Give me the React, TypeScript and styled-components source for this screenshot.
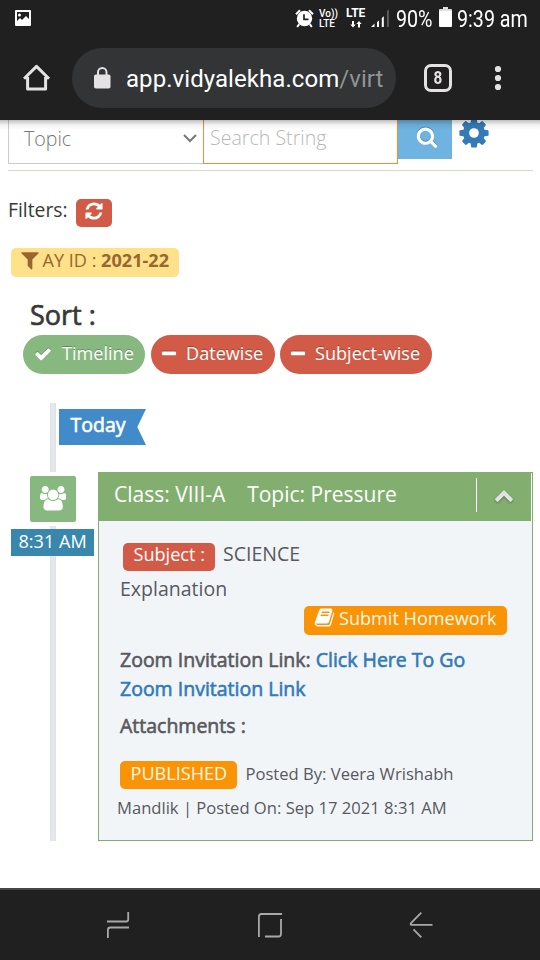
import React from "react";
import styled, { createGlobalStyle } from "styled-components";

const GlobalStyle = createGlobalStyle`
  * { box-sizing: border-box; }
  html, body { margin: 0; padding: 0; background: #fff; }
  body { font-family: "Open Sans", "Noto Sans", sans-serif; color: #393939; overflow: hidden; }
  svg { display: block; flex: none; }
`;

/* ---------- Icons ---------- */

const glyphs = {
  search:
    "M1216 832q0-185-131.5-316.5t-316.5-131.5-316.5 131.5-131.5 316.5 131.5 316.5 316.5 131.5 316.5-131.5 131.5-316.5zm512 832q0 52-38 90t-90 38q-54 0-90-38l-343-342q-179 124-399 124-143 0-273.5-55.5t-225-150-150-225-55.5-273.5 55.5-273.5 150-225 225-150 273.5-55.5 273.5 55.5 225 150 150 225 55.5 273.5q0 220-124 399l343 343q37 37 37 90z",
  refresh:
    "M1639 1056q0 5-1 7-64 268-268 434.5t-478 166.5q-146 0-282.5-55t-243.5-157l-129 129q-19 19-45 19t-45-19-19-45v-448q0-26 19-45t45-19h448q26 0 45 19t19 45-19 45l-137 137q71 66 161 102t187 36q134 0 250-65t186-179q11-17 53-117 8-23 30-23h192q13 0 22.5 9.5t9.5 22.5zm25-800v448q0 26-19 45t-45 19h-448q-26 0-45-19t-19-45 19-45l138-138q-148-137-349-137-134 0-250 65t-186 179q-11 17-53 117-8 23-30 23h-199q-13 0-22.5-9.5t-9.5-22.5v-7q65-268 270-434.5t480-166.5q146 0 284 55.5t245 156.5l130-129q19-19 45-19t45 19 19 45z",
  filter:
    "M1595 295q17 41-14 70l-493 493v742q0 42-39 59-13 5-25 5-27 0-45-19l-256-256q-19-19-19-45v-486l-493-493q-31-29-14-70 17-39 59-39h1280q42 0 59 39z",
  check:
    "M1671 566q0 40-28 68l-724 724-136 136q-28 28-68 28t-68-28l-136-136-362-362q-28-28-28-68t28-68l136-136q28-28 68-28t68 28l294 295 656-657q28-28 68-28t68 28l136 136q28 28 28 68z",
  minus:
    "M1600 736v192q0 40-28 68t-68 28h-1216q-40 0-68-28t-28-68v-192q0-40 28-68t68-28h1216q40 0 68 28t28 68z",
  chevronUp:
    "M1683 1331l-166 165q-19 19-45 19t-45-19l-531-531-531 531q-19 19-45 19t-45-19l-166-165q-19-19-19-45.5t19-45.5l742-741q19-19 45-19t45 19l742 741q19 19 19 45.5t-19 45.5z",
  cog: "M1152 896q0-106-75-181t-181-75-181 75-75 181 75 181 181 75 181-75 75-181zm512-109v222q0 12-8 23t-20 13l-185 28q-19 54-39 91 35 50 107 138 10 12 10 25t-9 23q-27 37-99 108t-94 71q-12 0-26-9l-138-108q-44 23-91 38-16 136-29 186-7 28-36 28h-222q-14 0-24.5-8.5t-11.5-21.5l-28-184q-49-16-90-37l-141 107q-10 9-25 9-14 0-25-11-126-114-165-168-7-10-7-23 0-12 8-23 15-21 51-66.5t54-70.5q-27-50-41-99l-183-27q-13-2-21-12.5t-8-23.5v-222q0-12 8-23t19-13l186-28q14-46 39-92-40-57-107-138-10-12-10-24 0-10 9-23 26-36 98.5-107.5t94.5-71.5q13 0 26 10l138 107q44-23 91-38 16-136 29-186 7-28 36-28h222q14 0 24.5 8.5t11.5 21.5l28 184q49 16 90 37l142-107q9-9 24-9 13 0 25 10 129 119 165 170 7 8 7 22 0 12-8 23-15 21-51 66.5t-54 70.5q26 50 41 98l183 28q13 2 21 12.5t8 23.5z",
  book: "M1703 478q40 57 18 129l-275 906q-19 64-76.5 107.5t-122.5 43.5h-923q-77 0-148.5-53.5t-99.5-131.5q-24-67-2-127 0-4 3-27t4-37q1-8-3-21.5t-3-19.5q2-11 8-21t16.5-23.5 16.5-23.5q23-38 45-91.5t30-91.5q3-10 .5-30t-.5-28q3-11 17-28t17-23q21-36 42-92t25-90q1-9-2.5-32t.5-28q4-13 22-30.5t22-22.5q19-26 42.5-84.5t27.5-96.5q1-8-3-25.5t-2-26.5q2-8 9-18t18-23 17-21q8-12 16.5-30.5t15-35 16-36 19.5-32 26.5-23.5 36-11.5 47.5 5.5l-1 3q38-9 51-9h761q74 0 114 56t18 130l-274 906q-36 119-71.5 153.5t-128.5 34.5h-869q-27 0-38 15-11 16-1 43 24 70 144 70h923q29 0 56-15.5t35-41.5l300-987q7-22 5-57 38 15 59 43zm-1064 2q-4 13 2 22.5t20 9.5h608q13 0 25.5-9.5t16.5-22.5l21-64q4-13-2-22.5t-20-9.5h-608q-13 0-25.5 9.5t-16.5 22.5zm-83 256q-4 13 2 22.5t20 9.5h608q13 0 25.5-9.5t16.5-22.5l21-64q4-13-2-22.5t-20-9.5h-608q-13 0-25.5 9.5t-16.5 22.5z",
  users:
    "M593 896q-162 5-265 128h-134q-82 0-138-40.5t-56-118.5q0-353 124-353 6 0 43.5 21t97.5 42.5 119 21.5q67 0 133-23-5 37-5 66 0 139 81 256zm1071 637q0 120-73 189.5t-194 69.5h-874q-121 0-194-69.5t-73-189.5q0-53 3.5-103.5t14-109 26.5-108.5 43-97.5 62-81 85.5-53.5 111.5-20q10 0 43 21.5t73 48 107 48 135 21.5 135-21.5 107-48 73-48 43-21.5q61 0 111.5 20t85.5 53.5 62 81 43 97.5 26.5 108.5 14 109 3.5 103.5zm-1024-1277q0 106-75 181t-181 75-181-75-75-181 75-181 181-75 181 75 75 181zm704 384q0 159-112.5 271.5t-271.5 112.5-271.5-112.5-112.5-271.5 112.5-271.5 271.5-112.5 271.5 112.5 112.5 271.5zm576 225q0 78-56 118.5t-138 40.5h-134q-103-123-265-128 81-117 81-256 0-29-5-66 66 23 133 23 59 0 119-21.5t97.5-42.5 43.5-21q124 0 124 353zm-128-609q0 106-75 181t-181 75-181-75-75-181 75-181 181-75 181 75 75 181z",
};

function Glyph({ name, size, wide }: { name: keyof typeof glyphs; size: number; wide?: boolean }) {
  const w = wide ? 1920 : 1792;
  return (
    <svg width={(size * w) / 1792} height={size} viewBox={`0 0 ${w} 1792`} fill="currentColor">
      <path d={glyphs[name]} />
    </svg>
  );
}

const PictureIcon = () => (
  <svg width="16" height="16" viewBox="0 0 16 16">
    <path
      fill="#fff"
      fillRule="evenodd"
      d="M1 0h14q1 0 1 1v14q0 1-1 1H1q-1 0-1-1V1Q0 0 1 0ZM2 2v9l3-3 2 2 4-4 3 3V2ZM4.500 3.500a1.500 1.500 0 1 1 0 3 1.500 1.500 0 0 1 0-3Z"
    />
  </svg>
);

const AlarmIcon = () => (
  <svg width="20" height="19" viewBox="0 0 20 19">
    <circle cx="9.500" cy="9.500" r="7.700" fill="#fff" />
    <path d="M1 5.200 5 1.200M14 1.200l4 4M4.200 15.200 2.200 18M14.800 15.200l2 2.800" stroke="#fff" strokeWidth="2" />
    <path d="M9 5.300v5h4.500" stroke="#202020" strokeWidth="1.700" fill="none" />
  </svg>
);

const DataArrows = () => (
  <svg width="12" height="7" viewBox="0 0 12 7" fill="#fff">
    <path d="M2 0h2v3.500h1.700L3 6.500.300 3.500H2ZM8 6.500h2V3h1.700L9 0 6.300 3H8Z" />
  </svg>
);

const SignalIcon = () => (
  <svg width="19" height="19" viewBox="0 0 19 19">
    <path fill="#fff" d="M0 18l3.500-3.500V18ZM6 13l2-1.500V18H6ZM10.800 9l2-1.700V18h-2Z" />
    <path fill="#606060" d="M16 2l1.800-1.500V18H16Z" />
  </svg>
);

const BatteryIcon = () => (
  <svg width="13" height="20" viewBox="0 0 13 20">
    <path fill="#ddd" d="M4 0h5v2h3q1 0 1 1v1H0V3q0-1 1-1h3Z" />
    <path fill="#fff" d="M0 4h13v15q0 1-1 1H1q-1 0-1-1Z" />
  </svg>
);

const HomeIcon = () => (
  <svg width="28" height="28" viewBox="0 0 28 28" fill="none" stroke="#e4e2e3" strokeWidth="3" strokeLinejoin="round">
    <path d="M1 14.800 13.500 2.400 26 14.800M4.600 13v12h18V13" />
  </svg>
);

const LockIcon = () => (
  <svg width="17" height="22" viewBox="0 0 17 22">
    <rect y="7.500" width="16.500" height="14" rx="1.800" fill="#e4e2e3" />
    <path d="M4 8V5.300a4.200 4.200 0 0 1 8.500 0V8" fill="none" stroke="#e4e2e3" strokeWidth="2" />
  </svg>
);

const MenuDots = () => (
  <svg width="8" height="26" viewBox="0 0 8 26" fill="#e4e2e3">
    <circle cx="4" cy="4" r="3.100" />
    <circle cx="4" cy="13" r="3.100" />
    <circle cx="4" cy="22" r="3.100" />
  </svg>
);

const SelectArrow = () => (
  <svg width="14" height="9" viewBox="0 0 14 9" fill="none" stroke="#777" strokeWidth="2">
    <path d="M1 1l6 6 6-6" />
  </svg>
);

const RecentsIcon = () => (
  <svg width="24" height="28" viewBox="0 0 24 28" fill="none" stroke="#a8a8a8" strokeWidth="1.800">
    <path d="M22.200 1v7.500q0 2-2 2H1M1.900 27v-8q0-2.500 2.500-2.500H23" />
  </svg>
);

const SquareIcon = () => (
  <svg width="26" height="26" viewBox="0 0 26 26" fill="none" stroke="#a8a8a8" strokeWidth="1.800">
    <path d="M1.900 25V4.500Q1.900 2 4.400 2H25M24 7v15q0 2.500-2.500 2.500H8" />
  </svg>
);

const BackIcon = () => (
  <svg width="24" height="28" viewBox="0 0 24 28" fill="none" stroke="#a8a8a8" strokeWidth="1.800">
    <path d="M12.300 1.700 2 12q-1 1.800.800 1.800H23.500M4.500 18.300l7.800 8" />
  </svg>
);

/* ---------- Phone chrome ---------- */

const Screen = styled.div`
  width: 540px;
  height: 960px;
  display: flex;
  flex-direction: column;
  overflow: hidden;
  background: #fff;
`;

const StatusBar = styled.header`
  height: 38px;
  flex: none;
  display: flex;
  align-items: flex-start;
  padding: 0 12px 0 15px;
  background: #202020;
  color: #fff;
  font-family: Roboto, sans-serif;
`;

const StatusSlot = styled.div<{ $top: number; $width: number }>`
  width: ${(p) => p.$width}px;
  padding-top: ${(p) => p.$top}px;
  flex: none;
`;

const StatusSpacer = styled.div`
  flex: 1;
`;

const VolteBadge = styled.div`
  display: flex;
  flex-direction: column;
  font: 500 10px/10px Roboto, sans-serif;
  white-space: nowrap;
`;

const LteLabel = styled.div`
  font: 700 12px/11px Roboto, sans-serif;
  white-space: nowrap;
  svg { margin: 2px 0 0 4px; }
`;

const CondensedText = styled.span<{ $scale: number }>`
  display: inline-block;
  font-size: 24px;
  line-height: 24px;
  white-space: nowrap;
  transform: scaleX(${(p) => p.$scale});
  transform-origin: left;
`;

const BrowserBar = styled.div`
  height: 82px;
  flex: none;
  display: flex;
  align-items: center;
  padding: 0 0 2px 23px;
  background: #202020;
`;

const AddressPill = styled.div`
  width: 324px;
  height: 60px;
  margin: 0 28px 0 21px;
  padding-left: 22px;
  border-radius: 30px;
  display: flex;
  align-items: center;
  background: #323436;
`;

const Address = styled.div`
  margin: 2px 0 0 15px;
  font: 400 24px/34px Roboto, sans-serif;
  letter-spacing: 0.060px;
  color: #fff;
  white-space: nowrap;
  span { color: #929394; }
`;

const TabCount = styled.div`
  width: 28px;
  height: 28px;
  border: 3px solid #e4e2e3;
  border-radius: 7px;
  margin-right: 42px;
  color: #e4e2e3;
  font: 700 18px/22px Roboto, sans-serif;
  text-align: center;
  span { display: block; transform: scaleX(0.850); }
`;

const NavBar = styled.nav`
  height: 72px;
  flex: none;
  display: flex;
  justify-content: space-between;
  align-items: center;
  padding: 0 107px 1px 106px;
  background: #202020;
  border-top: 2px solid #454545;
`;

/* ---------- Web page ---------- */

const Page = styled.main`
  height: 768px;
  flex: none;
  overflow: hidden;
  position: relative;
  &::before {
    content: "";
    position: absolute;
    inset: 0 0 auto;
    height: 10px;
    background: linear-gradient(rgba(0, 0, 0, 0.25), rgba(0, 0, 0, 0.05) 50%, transparent);
  }
`;

const SearchRow = styled.div`
  margin: 0 7px 0 8px;
  height: 51px;
  display: flex;
  align-items: flex-start;
  border-bottom: 1px solid #d3dccb;
`;

const Field = styled.div`
  width: 195px;
  height: 44px;
  display: flex;
  justify-content: space-between;
  padding: 0 6px 0 15px;
  border: solid #cccccc;
  border-width: 0 0 1px 1px;
  color: #777;
  font-size: 19.600px;
  font-weight: 300;
  line-height: 37px;
  white-space: nowrap;
  svg { margin-top: 14px; }
`;

const FocusedField = styled(Field)`
  padding-left: 6px;
  border: solid #e0963c;
  border-width: 0 1px 1px 1px;
  box-shadow: inset 0 0 1px rgba(240, 180, 60, 0.6);
  color: #b8b8b8;
  line-height: 35px;
`;

const SearchButton = styled.button`
  width: 54px;
  height: 39px;
  display: flex;
  align-items: flex-start;
  border: 0;
  padding: 6px 0 0 18px;
  background: #6fb3e0;
  color: #fff;
  svg { filter: drop-shadow(0 -1px 0 rgba(0, 0, 0, 0.25)); }
`;

const Settings = styled.div`
  margin: -4.500px 0 0 4.500px;
  color: #337ab7;
`;

const FilterRow = styled.div`
  display: flex;
  margin: 28px 0 0 8px;
  height: 28px;
  font-size: 19.300px;
  line-height: 22px;
`;

const RefreshButton = styled.button`
  display: flex;
  align-items: flex-start;
  width: 36px;
  height: 28px;
  margin-left: 8px;
  border: 0;
  border-radius: 5px;
  padding: 2px 0 0 8px;
  background: #d15b47;
  color: #fff;
`;

const FilterChip = styled.div`
  display: flex;
  width: 168px;
  height: 29px;
  margin: 21px 0 0 11px;
  padding-left: 9px;
  border-radius: 5px;
  background: #fee188;
  color: #996633;
  font-size: 18.100px;
  line-height: 24px;
  white-space: pre;
  svg { margin: 1px 2px 0 -1.500px; }
  b { font-weight: 700; }
`;

const SortTitle = styled.h2`
  margin: 0;
  height: 58px;
  padding: 20px 0 0 30px;
  font-size: 27px;
  line-height: 35px;
  font-weight: 400;
  -webkit-text-stroke: 0.700px currentColor;
`;

const SortRow = styled.div`
  display: flex;
  padding-left: 23px;
`;

const SortPill = styled.button<{ $active?: boolean; $width: number; $gap: number }>`
  width: ${(p) => p.$width}px;
  height: 39px;
  margin-right: ${(p) => p.$gap}px;
  padding: 0 0 0 ${(p) => (p.$active ? 11 : 9)}px;
  border: 0;
  border-radius: 20px;
  display: flex;
  align-items: flex-start;
  gap: ${(p) => (p.$active ? 10 : 8)}px;
  background: ${(p) => (p.$active ? "#87b87f" : "#d15b47")};
  color: #fff;
  font: 400 18.100px/37px "Open Sans", sans-serif;
  text-shadow: 0 -1px 0 rgba(0, 0, 0, 0.25);
  white-space: nowrap;
  svg { margin-top: 10px; filter: drop-shadow(0 -1px 0 rgba(0, 0, 0, 0.2)); }
`;

const DayGroup = styled.div`
  display: flex;
  height: 69px;
  margin: 29px 0 0 50px;
`;

const Rail = styled.div<{ $height: number }>`
  width: 6px;
  height: ${(p) => p.$height}px;
  background: #e4e8ec;
  border: solid #dfe3e8;
  border-width: 0 1px;
`;

const DayFlag = styled.div`
  width: 87px;
  height: 36px;
  margin: 6px 0 0 3px;
  padding-left: 11.500px;
  background: #428bca;
  clip-path: polygon(0 0, 100% 0, 90% 50%, 100% 100%, 0 100%);
  color: #fff;
  font-size: 19.500px;
  line-height: 32px;
  -webkit-text-stroke: 0.600px currentColor;
`;

const Entry = styled.article`
  display: flex;
  height: 369px;
`;

const EntrySide = styled.div`
  width: 98px;
  padding-top: 4px;
  ${Rail} { margin-left: 50px; }
`;

const EntryIcon = styled.div`
  width: 46px;
  height: 46px;
  margin: 0 0 4px 30px;
  padding: 10px;
  border-radius: 2px;
  background: #87b87f;
  color: #fff;
`;

const TimeLabel = styled.div`
  width: 83px;
  height: 27px;
  margin-left: 11px;
  padding-left: 7.500px;
  background: #3a87ad;
  color: #fff;
  font-size: 18.100px;
  line-height: 24px;
  white-space: nowrap;
`;

const Card = styled.section`
  width: 435px;
  border: 1px solid #82af6f;
  background: #f1f5f8;
  color: #58595f;
`;

const CardHeader = styled.div`
  height: 48px;
  display: flex;
  padding-left: 15px;
  background: #82af6f;
  border-right: 1px solid #fff;
  color: #fff;
  font-size: 21px;
  line-height: 42px;
  white-space: pre;
`;

const Collapse = styled.div`
  width: 55px;
  height: 34px;
  margin: 5px 0 0 auto;
  padding: 7px 0 0 17px;
  border-left: 1px solid #fff;
  color: #e2e2e2;
  svg { filter: drop-shadow(0 1px 1px rgba(0, 0, 0, 0.35)); }
`;

const CardBody = styled.div`
  padding: 22px 0 0 21px;
  font-size: 19.500px;
`;

const Line = styled.div<{ $top: number; $height: number }>`
  display: flex;
  margin-top: ${(p) => p.$top}px;
  height: ${(p) => p.$height}px;
  white-space: pre;
`;

const Tag = styled.span<{ $tone: "red" | "orange"; $width: number }>`
  width: ${(p) => p.$width}px;
  height: 28px;
  padding-left: 10.500px;
  border-radius: 5px;
  display: flex;
  background: ${(p) => (p.$tone === "red" ? "#d15b47" : "#f89406")};
  color: ${(p) => (p.$tone === "red" ? "#fff" : "#fff8e4")};
  font-size: 18.100px;
  line-height: 25px;
  white-space: nowrap;
`;

const SubjectLine = styled(Line)`
  padding-left: 3px;
  gap: 8px;
  line-height: 22px;
  ${Tag} { line-height: 22px; }
`;

const HomeworkLine = styled(Line)`
  justify-content: flex-end;
  padding-right: 25px;
  ${Tag} { height: 29px; line-height: 24px; padding-left: 10px; }
  svg { margin: 1px 4px 0 0; color: #fff; }
`;

const StrongLine = styled(Line)`
  -webkit-text-stroke: 0.600px currentColor;
  line-height: 29px;
  font-size: 19.500px;
`;

const ZoomLink = styled.a`
  color: #337ab7;
`;

const Meta = styled(Line)`
  font-size: 16.600px;
  line-height: 25px;
  gap: 8.500px;
`;

const MetaWrap = styled(Meta)`
  margin-left: -3px;
`;

export default function App() {
  return (
    <>
      <GlobalStyle />
      <Screen>
        <StatusBar>
          <StatusSlot $top={10} $width={16}><PictureIcon /></StatusSlot>
          <StatusSpacer />
          <StatusSlot $top={9} $width={24}><AlarmIcon /></StatusSlot>
          <StatusSlot $top={9} $width={27}>
            <VolteBadge>
              <span>Vo))</span>
              <span>LTE</span>
            </VolteBadge>
          </StatusSlot>
          <StatusSlot $top={8} $width={25}>
            <LteLabel>LTE<DataArrows /></LteLabel>
          </StatusSlot>
          <StatusSlot $top={9} $width={25}><SignalIcon /></StatusSlot>
          <StatusSlot $top={7} $width={43}><CondensedText $scale={0.82}>90%</CondensedText></StatusSlot>
          <StatusSlot $top={7} $width={18}><BatteryIcon /></StatusSlot>
          <StatusSlot $top={7} $width={71}><CondensedText $scale={0.82}>9:39 am</CondensedText></StatusSlot>
        </StatusBar>

        <BrowserBar>
          <HomeIcon />
          <AddressPill>
            <LockIcon />
            <Address>app.vidyalekha.com<span>/virt</span></Address>
          </AddressPill>
          <TabCount><span>8</span></TabCount>
          <MenuDots />
        </BrowserBar>

        <Page>
          <SearchRow>
            <Field>Topic<SelectArrow /></Field>
            <FocusedField>Search String</FocusedField>
            <SearchButton aria-label="Search"><Glyph name="search" size={22} /></SearchButton>
            <Settings><Glyph name="cog" size={34} /></Settings>
          </SearchRow>

          <FilterRow>
            Filters:
            <RefreshButton aria-label="Refresh"><Glyph name="refresh" size={20} /></RefreshButton>
          </FilterRow>
          <FilterChip><Glyph name="filter" size={22} />AY ID : <b>2021-22</b></FilterChip>

          <SortTitle>Sort :</SortTitle>
          <SortRow>
            <SortPill $active $width={122} $gap={6}><Glyph name="check" size={18} />Timeline</SortPill>
            <SortPill $width={124} $gap={5}><Glyph name="minus" size={18} />Datewise</SortPill>
            <SortPill $width={152} $gap={0}><Glyph name="minus" size={18} />Subject-wise</SortPill>
          </SortRow>

          <DayGroup>
            <Rail $height={69} />
            <DayFlag>Today</DayFlag>
          </DayGroup>

          <Entry>
            <EntrySide>
              <EntryIcon><Glyph name="users" size={24.500} wide /></EntryIcon>
              <Rail $height={3} />
              <TimeLabel>8:31 AM</TimeLabel>
              <Rail $height={285} />
            </EntrySide>
            <Card>
              <CardHeader>
                {"Class: VIII-A    Topic: Pressure"}
                <Collapse><Glyph name="chevronUp" size={20} /></Collapse>
              </CardHeader>
              <CardBody>
                <SubjectLine $top={0} $height={28}>
                  <Tag $tone="red" $width={92}>Subject :</Tag>
                  SCIENCE
                </SubjectLine>
                <Line $top={4} $height={31}>Explanation</Line>
                <HomeworkLine $top={0} $height={29}>
                  <Tag $tone="orange" $width={203}><Glyph name="book" size={21} />Submit Homework</Tag>
                </HomeworkLine>
                <StrongLine $top={10} $height={29}>
                  {"Zoom Invitation Link: "}<ZoomLink>Click Here To Go</ZoomLink>
                </StrongLine>
                <StrongLine $top={0} $height={29}><ZoomLink>Zoom Invitation Link</ZoomLink></StrongLine>
                <StrongLine $top={8} $height={29}>Attachments :</StrongLine>
                <Meta $top={21} $height={28}>
                  <Tag $tone="orange" $width={117}>PUBLISHED</Tag>
                  Posted By: Veera Wrishabh
                </Meta>
                <MetaWrap $top={6} $height={25}>Mandlik | Posted On: Sep 17 2021 8:31 AM</MetaWrap>
              </CardBody>
            </Card>
          </Entry>
        </Page>

        <NavBar>
          <RecentsIcon />
          <SquareIcon />
          <BackIcon />
        </NavBar>
      </Screen>
    </>
  );
}
